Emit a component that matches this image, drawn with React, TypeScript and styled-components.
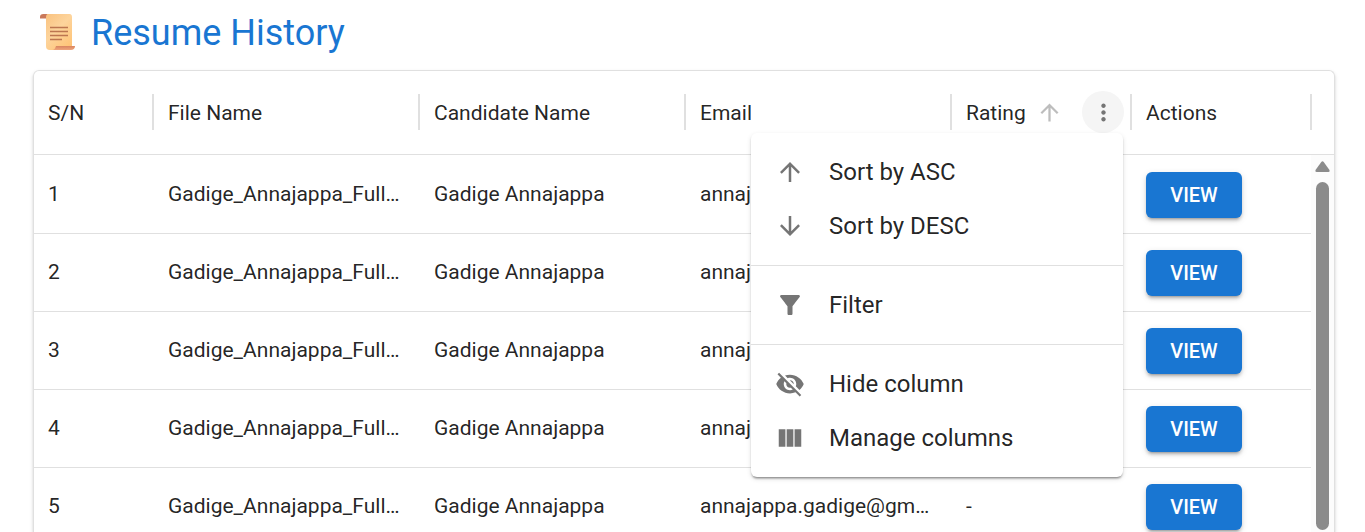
import React from "react";
import styled, { createGlobalStyle } from "styled-components";

const GlobalStyle = createGlobalStyle`
  *, *::before, *::after { box-sizing: border-box; }
  body {
    margin: 0;
    background: #fff;
    color: rgba(0, 0, 0, 0.87);
    font-family: Roboto, "Liberation Sans", sans-serif;
    font-size: 21px;
  }
`;

const Page = styled.main`
  display: flex;
  flex-direction: column;
  height: 100vh;
  padding: 9px 30px 0 33px;
  overflow: hidden;
`;

const Title = styled.h1`
  display: flex;
  align-items: center;
  gap: 15px;
  margin: 0 0 13px;
  padding-left: 6px;
  color: #1976d2;
  font-size: 36px;
  font-weight: 400;
  line-height: 48px;
`;

const GridCard = styled.section`
  position: relative;
  flex: 1;
  min-height: 0;
  border: 1px solid #e0e0e0;
  border-bottom: 0;
  border-radius: 6px 6px 0 0;
  box-shadow: 0 3px 2px -2px rgba(0, 0, 0, 0.2), 0 2px 2px rgba(0, 0, 0, 0.1),
    0 2px 4px rgba(0, 0, 0, 0.12);
`;

const Table = styled.table`
  width: 100%;
  table-layout: fixed;
  border-collapse: separate;
  border-spacing: 0;
`;

const Col = styled.col<{ $width?: number }>`
  width: ${(p) => (p.$width ? `${p.$width}px` : "auto")};
`;

const HeadCell = styled.th`
  height: 84px;
  padding: 0 0 1px;
  border-bottom: 1px solid #e0e0e0;
  color: rgba(0, 0, 0, 0.87);
  font-weight: 400;
  text-align: left;
`;

const HeadContent = styled.div`
  display: flex;
  align-items: center;
  height: 36px;
  padding-left: 14px;
  border-right: 2px solid #e0e0e0;
`;

const HeadLabel = styled.span`
  padding-top: 2px;
`;

const SortIcon = styled.span`
  display: flex;
  margin-left: 10px;
  color: #bdbdbd;
`;

const MenuAnchor = styled.div`
  position: relative;
  margin: 0 6px 0 auto;
`;

const IconButton = styled.button`
  display: flex;
  align-items: center;
  justify-content: center;
  width: 42px;
  height: 42px;
  padding: 0;
  border: 0;
  border-radius: 50%;
  background: #f5f5f5;
  color: #757575;
`;

const BodyRow = styled.tr`
  & + & > td {
    border-top: 1px solid #e0e0e0;
  }
`;

const Cell = styled.td`
  height: 78px;
  padding: 0 14px 1px;
  overflow: hidden;
  white-space: nowrap;
  text-overflow: ellipsis;
`;

const ViewButton = styled.button`
  display: block;
  width: 96px;
  height: 46px;
  margin-top: 2px;
  padding: 0;
  border: 0;
  border-radius: 6px;
  background: #1976d2;
  box-shadow: 0 4px 2px -3px rgba(0, 0, 0, 0.2), 0 3px 3px rgba(0, 0, 0, 0.14),
    0 2px 7px rgba(0, 0, 0, 0.12);
  color: #fff;
  font: 500 20px Roboto, "Liberation Sans", sans-serif;
`;

const Menu = styled.ul`
  position: absolute;
  z-index: 2;
  top: 100%;
  right: 1px;
  width: 372px;
  margin: 0;
  padding: 12px 0;
  border-radius: 6px;
  background: #fff;
  box-shadow: 0 3px 2px -2px rgba(0, 0, 0, 0.3), 0 2px 2px rgba(0, 0, 0, 0.14),
    0 2px 5px rgba(0, 0, 0, 0.12);
  list-style: none;
`;

const MenuDivider = styled.li`
  height: 1px;
  margin: 12px 0;
  background: #e0e0e0;
`;

const MenuButton = styled.button`
  display: flex;
  align-items: center;
  gap: 24px;
  width: 100%;
  height: 54px;
  padding: 0 24px;
  border: 0;
  background: none;
  color: rgba(0, 0, 0, 0.87);
  font: 400 24px Roboto, "Liberation Sans", sans-serif;
  text-align: left;

  svg {
    color: #757575;
  }
`;

const ScrollTrack = styled.div`
  position: absolute;
  top: 84px;
  right: 0;
  bottom: 0;
  display: flex;
  flex-direction: column;
  align-items: center;
  gap: 10px;
  width: 23px;
  padding: 6px 0 2px;
  background: #fcfcfc;
`;

const ScrollThumb = styled.div`
  flex: 1;
  width: 13px;
  border-radius: 7px;
  background: #8b8b8b;
`;

const ICONS = {
  up: "M4 12l1.41 1.41L11 7.83V20h2V7.83l5.58 5.59L20 12l-8-8-8 8z",
  down: "M20 12l-1.41-1.41L13 16.17V4h-2v12.17l-5.58-5.59L4 12l8 8 8-8z",
  more: "M12 8c1.1 0 2-.9 2-2s-.9-2-2-2-2 .9-2 2 .9 2 2 2zm0 2c-1.1 0-2 .9-2 2s.9 2 2 2 2-.9 2-2-.9-2-2-2zm0 6c-1.1 0-2 .9-2 2s.9 2 2 2 2-.9 2-2-.9-2-2-2z",
  filter:
    "M4.25 5.61C6.27 8.2 10 13 10 13v6c0 .55.45 1 1 1h2c.55 0 1-.45 1-1v-6s3.72-4.8 5.74-7.39c.51-.66.04-1.61-.79-1.61H5.04c-.83 0-1.3.95-.79 1.61z",
  hide: "M12 7c2.76 0 5 2.24 5 5 0 .65-.13 1.26-.36 1.83l2.92 2.92c1.51-1.26 2.7-2.89 3.43-4.75-1.73-4.39-6-7.5-11-7.5-1.4 0-2.74.25-3.98.7l2.16 2.16C10.74 7.13 11.35 7 12 7zM2 4.27l2.28 2.28.46.46C3.08 8.3 1.78 10.02 1 12c1.73 4.39 6 7.5 11 7.5 1.55 0 3.03-.3 4.38-.84l.42.42L19.73 22 21 20.73 3.27 3 2 4.27zM7.53 9.8l1.55 1.55c-.05.21-.08.43-.08.65 0 1.66 1.34 3 3 3 .22 0 .44-.03.65-.08l1.55 1.55c-.67.33-1.41.53-2.2.53-2.76 0-5-2.24-5-5 0-.79.2-1.53.53-2.2zm4.31-.78l3.15 3.15.02-.16c0-1.66-1.34-3-3-3l-.17.01z",
  columns: "M14.67 5v14H9.33V5h5.34zm1 14H21V5h-5.33v14zm-7.34 0V5H3v14h5.33z",
};

type IconName = keyof typeof ICONS;

const Icon = ({ name, size = 30 }: { name: IconName; size?: number }) => (
  <svg width={size} height={size} viewBox="0 0 24 24" fill="currentColor" aria-hidden="true">
    <path d={ICONS[name]} />
  </svg>
);

const ScrollLogo = () => (
  <svg width="37" height="40" viewBox="0 0 37 40" aria-hidden="true">
    <defs>
      <linearGradient id="paper" x1="0" y1="0" x2="0.8" y2="1">
        <stop offset="0" stopColor="#f9c07c" />
        <stop offset="0.5" stopColor="#fdd49c" />
        <stop offset="1" stopColor="#ffc477" />
      </linearGradient>
      <linearGradient id="curl" x1="0" y1="0" x2="0" y2="1">
        <stop offset="0" stopColor="#d98560" />
        <stop offset="1" stopColor="#f0a67c" />
      </linearGradient>
    </defs>
    <path d="M4 1h26.500c2 0 2.500 1.500 2.500 3.500v28.500c0 3-1 4-3 4H11c-3 0-4-1.500-4-4V5L4 1z" fill="url(#paper)" />
    <path d="M4.500 1C2 1 1 2.300 1 4v1.500h6V4.500c0-2 .5-3 1.500-3.500z" fill="#c9785a" />
    <path d="M17 33h19c0 2.700-1.700 4-4 4H13c2.500 0 3-1.500 4-4z" fill="url(#curl)" />
    <path d="M11 14.500h18M11 18.500h18M11 22.500h18M11 26.500h12" stroke="#bd7650" strokeWidth="1.600" fill="none" />
  </svg>
);

const MENU_GROUPS: { icon: IconName; label: string }[][] = [
  [
    { icon: "up", label: "Sort by ASC" },
    { icon: "down", label: "Sort by DESC" },
  ],
  [{ icon: "filter", label: "Filter" }],
  [
    { icon: "hide", label: "Hide column" },
    { icon: "columns", label: "Manage columns" },
  ],
];

const ROWS = [1, 2, 3, 4, 5].map((sn) => ({
  sn,
  file: "Gadige_Annajappa_Full…",
  name: "Gadige Annajappa",
  email: "annajappa.gadige@gm…",
  rating: "-",
}));

const ColumnMenu = () => (
  <Menu aria-label="Rating column">
    {MENU_GROUPS.map((group, i) => (
      <React.Fragment key={i}>
        {i > 0 && <MenuDivider role="separator" />}
        {group.map((item) => (
          <li key={item.label}>
            <MenuButton type="button">
              <Icon name={item.icon} />
              {item.label}
            </MenuButton>
          </li>
        ))}
      </React.Fragment>
    ))}
  </Menu>
);

const ColumnHead = ({ label, children }: { label: string; children?: React.ReactNode }) => (
  <HeadCell scope="col">
    <HeadContent>
      <HeadLabel>{label}</HeadLabel>
      {children}
    </HeadContent>
  </HeadCell>
);

export default function App() {
  return (
    <Page>
      <GlobalStyle />
      <Title>
        <ScrollLogo />
        Resume History
      </Title>
      <GridCard>
        <Table>
          <colgroup>
            <Col $width={120} />
            <Col />
            <Col />
            <Col />
            <Col $width={180} />
            <Col $width={180} />
            <Col $width={22} />
          </colgroup>
          <thead>
            <tr>
              <ColumnHead label="S/N" />
              <ColumnHead label="File Name" />
              <ColumnHead label="Candidate Name" />
              <ColumnHead label="Email" />
              <ColumnHead label="Rating">
                <SortIcon>
                  <Icon name="up" size={27} />
                </SortIcon>
                <MenuAnchor>
                  <IconButton type="button" aria-label="Rating column menu" aria-expanded="true">
                    <Icon name="more" size={27} />
                  </IconButton>
                  <ColumnMenu />
                </MenuAnchor>
              </ColumnHead>
              <ColumnHead label="Actions" />
              <HeadCell as="td" />
            </tr>
          </thead>
          <tbody>
            {ROWS.map((row) => (
              <BodyRow key={row.sn}>
                <Cell>{row.sn}</Cell>
                <Cell>{row.file}</Cell>
                <Cell>{row.name}</Cell>
                <Cell>{row.email}</Cell>
                <Cell>{row.rating}</Cell>
                <Cell>
                  <ViewButton type="button">VIEW</ViewButton>
                </Cell>
              </BodyRow>
            ))}
          </tbody>
        </Table>
        <ScrollTrack aria-hidden="true">
          <svg width="15" height="11" viewBox="0 0 15 11">
            <path d="M6.300 1q1.200-1.600 2.400 0l5.600 7.800q1 2.200-1 2.200H1.700q-2 0-1-2.200z" fill="#8b8b8b" />
          </svg>
          <ScrollThumb />
        </ScrollTrack>
      </GridCard>
    </Page>
  );
}
